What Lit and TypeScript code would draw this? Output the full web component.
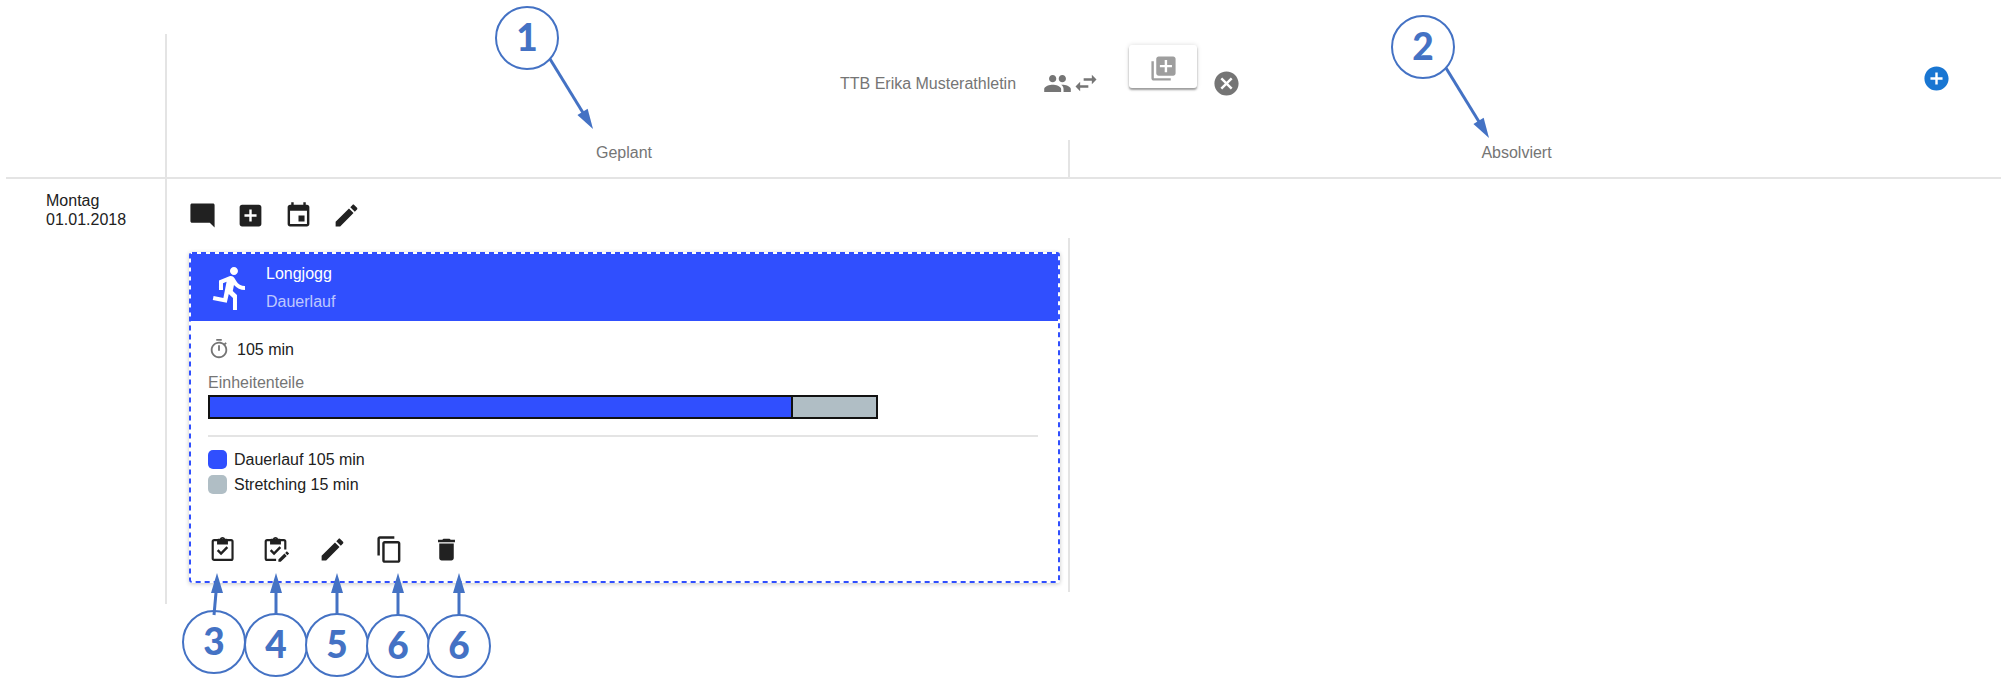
import { LitElement, html, svg, css, nothing } from "lit";
import { customElement, property } from "lit/decorators.js";

const filled = (d: string) => svg`<path d=${d} fill="currentColor"></path>`;

const clip = svg`<path d="M16.5 4.2a1 1 0 0 0-1-1h-1.3a2.3 2.3 0 0 0-4.4 0H8.500a1 1 0 0 0-1 1v3.600h9z M12 3.2a.9.9 0 1 1 0 1.8.9.9 0 0 1 0-1.8z" fill="currentColor" fill-rule="evenodd"></path>`;

const ICONS: Record<string, unknown> = {
  comment: filled("M22 3.500c0-1-.5-1.500-1.500-1.500H3.500c-1 0-1.500.5-1.500 1.500v13c0 1 .5 1.500 1.500 1.500H18l4 4z"),
  addBox: filled("M19 3H5c-1.11 0-2 .9-2 2v14c0 1.1.89 2 2 2h14c1.1 0 2-.9 2-2V5c0-1.1-.9-2-2-2zm-2 10h-4v4h-2v-4H7v-2h4V7h2v4h4v2z"),
  event: filled("M17 12h-5v5h5v-5zM16 1v2H8V1H6v2H5c-1.11 0-1.99.9-1.99 2L3 19c0 1.1.89 2 2 2h14c1.1 0 2-.9 2-2V5c0-1.1-.9-2-2-2h-1V1h-2zm3 18H5V8h14v11z"),
  edit: filled("M3 17.25V21h3.75L17.81 9.94l-3.75-3.75L3 17.25zM20.71 7.04c.39-.39.39-1.02 0-1.41l-2.34-2.34c-.39-.39-1.02-.39-1.41 0l-1.83 1.83 3.75 3.75 1.83-1.83z"),
  people: filled("M16 11c1.66 0 2.99-1.34 2.99-3S17.66 5 16 5c-1.66 0-3 1.34-3 3s1.34 3 3 3zm-8 0c1.66 0 2.99-1.34 2.99-3S9.66 5 8 5C6.34 5 5 6.34 5 8s1.34 3 3 3zm0 2c-2.33 0-7 1.17-7 3.5V19h14v-2.5c0-2.33-4.67-3.5-7-3.5zm8 0c-.29 0-.62.02-.97.05 1.16.84 1.97 1.97 1.97 3.45V19h6v-2.5c0-2.33-4.67-3.5-7-3.5z"),
  swap: filled("M6.99 11L3 15l3.99 4v-3H14v-2H6.99v-3zM21 9l-3.99-4v3H10v2h7.01v3L21 9z"),
  library: filled("M4 6H2v14c0 1.1.9 2 2 2h14v-2H4V6zm16-4H8c-1.1 0-2 .9-2 2v12c0 1.1.9 2 2 2h12c1.1 0 2-.9 2-2V4c0-1.1-.9-2-2-2zm-1 9h-4v4h-2v-4H9V9h4V5h2v4h4v2z"),
  cancel: filled("M12 2C6.47 2 2 6.47 2 12s4.47 10 10 10 10-4.47 10-10S17.53 2 12 2zm5 13.59L15.59 17 12 13.41 8.41 17 7 15.59 10.59 12 7 8.41 8.41 7 12 10.59 15.59 7 17 8.41 13.41 12 17 15.59z"),
  addCircle: filled("M12 2C6.48 2 2 6.48 2 12s4.48 10 10 10 10-4.48 10-10S17.52 2 12 2zm5 11h-4v4h-2v-4H7v-2h4V7h2v4h4v2z"),
  run: filled("M13.49 5.48c1.1 0 2-.9 2-2s-.9-2-2-2-2 .9-2 2 .9 2 2 2zm-3.6 13.9l1-4.4 2.1 2v6h2v-7.5l-2.1-2 .6-3c1.3 1.5 3.3 2.5 5.5 2.5v-2c-1.9 0-3.5-1-4.3-2.4l-1-1.6c-.4-.6-1-1-1.7-1-.3 0-.5.1-.8.1l-5.2 2.2v4.7h2v-3.4l1.8-.7-1.6 8.1-4.9-1-.4 2 7 1.4z"),
  timer: filled("M15 1H9v2h6V1zm-4 13h2V8h-2v6zm8.03-6.61l1.42-1.42c-.43-.51-.9-.99-1.41-1.41l-1.42 1.42C16.07 4.74 14.12 4 12 4c-4.97 0-9 4.03-9 9s4.02 9 9 9 9-4.03 9-9c0-2.12-.74-4.07-1.97-5.61zM12 20c-3.87 0-7-3.13-7-7s3.13-7 7-7 7 3.13 7 7-3.13 7-7 7z"),
  copy: filled("M16 1H4c-1.1 0-2 .9-2 2v14h2V3h12V1zm3 4H8c-1.1 0-2 .9-2 2v14c0 1.1.9 2 2 2h11c1.1 0 2-.9 2-2V7c0-1.1-.9-2-2-2zm0 16H8V7h11v14z"),
  remove: filled("M6 19c0 1.1.9 2 2 2h8c1.1 0 2-.9 2-2V7H6v12zM19 4h-3.5l-1-1h-5l-1 1H5v2h14V4z"),
  done: svg`<rect x="3.9" y="4.200" width="16.4" height="16.4" rx="1.2" fill="none" stroke="currentColor" stroke-width="1.8"></rect>
    ${clip}<path d="M8 12.600l2.8 2.8 5.2-5.4" fill="none" stroke="currentColor" stroke-width="2"></path>`,
  doneEdit: svg`<path d="M20.1 12V5.4a1.2 1.2 0 0 0-1.2-1.2H5.1a1.2 1.2 0 0 0-1.2 1.2v14a1.2 1.2 0 0 0 1.2 1.2h7.4" fill="none" stroke="currentColor" stroke-width="1.8"></path>
    ${clip}<path d="M8 12.600l2.8 2.8 5.2-5.4" fill="none" stroke="currentColor" stroke-width="2"></path>
    <path d="M14.4 20.2v1.900h1.900l5-4.8-1.9-1.9zM20 14.800l1.900 1.900 1.400-1.300-1.900-1.900z" fill="currentColor"></path>`,
};

@customElement("app-icon")
class AppIcon extends LitElement {
  @property() name = "";
  static styles = css`
    :host { display: block; flex: none; width: 29px; height: 29px; }
    svg { display: block; width: 100%; height: 100%; }
  `;
  render() {
    return html`<svg viewBox="0 0 24 24" aria-hidden="true">${ICONS[this.name] ?? nothing}</svg>`;
  }
}

/* Numbered marker whose arrow tip sits at (x, y) measured from the anchor's top left corner. */
@customElement("call-out")
class CallOut extends LitElement {
  @property() label = "";
  @property({ type: Number }) x = 0;
  @property({ type: Number }) y = 0;
  @property({ type: Number }) dx = 0;
  @property({ type: Number }) dy = 72;
  static styles = css`
    :host { position: absolute; left: 0; top: 0; pointer-events: none; z-index: 2; }
    svg { display: block; width: 1px; height: 1px; overflow: visible; }
    .ring { fill: #fff; stroke: #4472c4; stroke-width: 2; }
    .shaft { stroke: #4472c4; stroke-width: 3; }
    .head { fill: #4472c4; }
    .num { fill: #4472c4; font: 900 37px Lato, "Open Sans", sans-serif; text-anchor: middle; }
  `;
  render() {
    const vertical = Math.abs(this.dx) < 6;
    const sx = vertical ? 0 : Math.sign(this.dx) * 43;
    const sy = vertical ? Math.sign(this.dy) * 42 : Math.sign(this.dy) * 70;
    const angle = (Math.atan2(-sy, -sx) * 180) / Math.PI;
    return html`<svg>
      <g transform="translate(${this.x} ${this.y})">
        <circle class="ring" cx=${this.dx} cy=${this.dy} r="31"></circle>
        <line class="shaft" x1=${vertical ? this.dx : sx} y1=${sy} x2=${sx * 0.2} y2=${sy * 0.2}></line>
        <path class="head" d="M0 0L-20 -6V6Z" transform="rotate(${angle})"></path>
        <text class="num" x=${this.dx} y=${this.dy + 13}>${this.label}</text>
      </g>
    </svg>`;
  }
}

const PARTS = [
  { name: "Dauerlauf", minutes: 105, color: "#304ffe" },
  { name: "Stretching", minutes: 15, color: "#b0bec5" },
];

const DAY_TOOLS = [
  { icon: "comment", label: "Kommentar" },
  { icon: "addBox", label: "Einheit hinzufügen" },
  { icon: "event", label: "Termin" },
  { icon: "edit", label: "Bearbeiten" },
];

const UNIT_TOOLS = [
  { icon: "done", label: "Absolviert", mark: "3", x: 9, dx: -3, dy: 69 },
  { icon: "doneEdit", label: "Absolviert mit Anpassung", mark: "4", x: 15, dx: 0, dy: 72 },
  { icon: "edit", label: "Bearbeiten", mark: "5", x: 19, dx: 0, dy: 72 },
  { icon: "copy", label: "Kopieren", mark: "6", x: 23, dx: 0, dy: 73 },
  { icon: "remove", label: "Löschen", mark: "6", x: 27, dx: 0, dy: 73 },
];

@customElement("app-root")
class AppRoot extends LitElement {
  static styles = css`
    :host {
      display: block;
      background: #fff;
      color: #212121;
      font: 16px/19px "Liberation Sans", Arial, sans-serif;
    }
    * { box-sizing: border-box; }
    button { font: inherit; color: inherit; background: none; border: 0; padding: 0; margin: 0; display: block; cursor: pointer; }
    .board { padding: 34px 7px 80px 6px; }
    .row { display: grid; grid-template-columns: 161px 903fr 931fr; }
    .head { border-bottom: 2px solid #e4e4e4; color: #757575; }
    .side { border-right: 2px solid #e4e4e4; grid-row: 1 / span 2; }
    .topbar { grid-column: 2 / span 2; height: 106px; padding: 11px 50px 0 0; display: flex; align-items: flex-start; }
    .athlete { margin: 0 auto; padding-right: 8px; display: flex; align-items: center; }
    .people { margin-left: 27px; display: flex; align-items: center; }
    .swap { width: 28px; height: 28px; }
    .library {
      width: 68px; height: 43px; margin: 0 15px 33px 29px; padding-top: 4px; display: grid; place-items: center;
      color: #9e9e9e; border-radius: 3px; background: #fff;
      box-shadow: 0 2px 2px rgba(0, 0, 0, .35), 0 0 5px rgba(0, 0, 0, .14);
    }
    .add { color: #1976d2; margin-top: 19px; }
    .label { height: 37px; padding-top: 3px; text-align: center; }
    .label.planned { padding-left: 13px; border-right: 2px solid #e4e4e4; }
    .label.done { padding-right: 38px; }
    .anchor { position: relative; display: inline-block; }
    .date { padding: 12px 0 0 40px; }
    .daytools { height: 59px; padding: 22px 0 0 21px; display: flex; align-items: flex-start; gap: 19px; }
    .planned-area { grid-column: 2; padding: 14px 8px 9px 22px; border-right: 2px solid #e4e4e4; margin-bottom: 12px; }
    .card { position: relative; padding: 2px; border-radius: 2px; box-shadow: 0 1px 4px rgba(0, 0, 0, .22); }
    .dashes { position: absolute; left: 1px; top: 1px; width: calc(100% - 2px); height: calc(100% - 2px); overflow: visible; pointer-events: none; }
    .dashes rect { fill: none; stroke: #304ffe; stroke-width: 2; stroke-dasharray: 5 4; }
    .cardhead { height: 67px; padding: 0 16px; display: flex; align-items: center; gap: 11px; background: #304ffe; color: #fff; }
    .run { width: 48px; height: 48px; }
    .titles { display: flex; flex-direction: column; gap: 9px; }
    .title, .kind { margin: 0; font-size: 16px; font-weight: 400; }
    .kind { color: rgba(255, 255, 255, .7); }
    .body { padding: 17px 20px 17px 17px; }
    .duration { display: flex; align-items: center; gap: 7px; }
    .timer { width: 22px; height: 22px; color: #757575; }
    .parts { margin: 13px 0 3px; color: #757575; }
    .bar { display: flex; width: 670px; max-width: 100%; height: 24px; border: 2px solid #111; }
    .seg + .seg { border-left: 2px solid #111; }
    .legend { list-style: none; margin: 16px 0 0; padding: 12px 0 0; border-top: 2px solid #e4e4e4; display: grid; gap: 5px; }
    .legend li { display: flex; align-items: center; gap: 7px; height: 20px; }
    .swatch { width: 19px; height: 19px; border-radius: 5px; }
    .actions { margin-top: 41px; display: flex; gap: 28px; }
    .actions .anchor:first-child { margin-right: -4px; }
  `;

  render() {
    return html`
      <main class="board">
        <header class="row head">
          <div class="side"></div>
          <div class="topbar">
            <div class="athlete">
              <span>TTB Erika Musterathletin</span>
              <button class="people" aria-label="Athlet wechseln">
                <app-icon name="people"></app-icon><app-icon class="swap" name="swap"></app-icon>
              </button>
              <button class="library" aria-label="Vorlage hinzufügen"><app-icon name="library"></app-icon></button>
              <button aria-label="Schliessen"><app-icon name="cancel"></app-icon></button>
            </div>
            <button class="add" aria-label="Hinzufügen"><app-icon name="addCircle"></app-icon></button>
          </div>
          <div class="label planned">
            <span class="anchor">Geplant<call-out label="1" x="-3" y="-14" dx="-66" dy="-91"></call-out></span>
          </div>
          <div class="label done">
            <span class="anchor">Absolviert<call-out label="2" x="8" y="-5" dx="-66" dy="-91"></call-out></span>
          </div>
        </header>

        <section class="row">
          <div class="side date">Montag<br />01.01.2018</div>
          <div class="daytools">
            ${DAY_TOOLS.map((t) => html`<button aria-label=${t.label}><app-icon name=${t.icon}></app-icon></button>`)}
          </div>
          <div class="planned-area">
            <article class="card">
              <div class="cardhead">
                <app-icon class="run" name="run"></app-icon>
                <div class="titles">
                  <h2 class="title">Longjogg</h2>
                  <p class="kind">Dauerlauf</p>
                </div>
              </div>
              <div class="body">
                <div class="duration"><app-icon class="timer" name="timer"></app-icon><span>105 min</span></div>
                <div class="parts">Einheitenteile</div>
                <div class="bar">
                  ${PARTS.map((p) => html`<div class="seg" style="flex:${p.minutes} 0 0;background:${p.color}"></div>`)}
                </div>
                <ul class="legend">
                  ${PARTS.map((p) => html`<li><span class="swatch" style="background:${p.color}"></span><span>${p.name} ${p.minutes} min</span></li>`)}
                </ul>
                <div class="actions">
                  ${UNIT_TOOLS.map((t) => html`<div class="anchor">
                    <button aria-label=${t.label}><app-icon name=${t.icon}></app-icon></button>
                    <call-out label=${t.mark} x=${t.x} y="38" dx=${t.dx} dy=${t.dy}></call-out>
                  </div>`)}
                </div>
              </div>
              <svg class="dashes" aria-hidden="true"><rect width="100%" height="100%" rx="2"></rect></svg>
            </article>
          </div>
        </section>
      </main>
    `;
  }
}
